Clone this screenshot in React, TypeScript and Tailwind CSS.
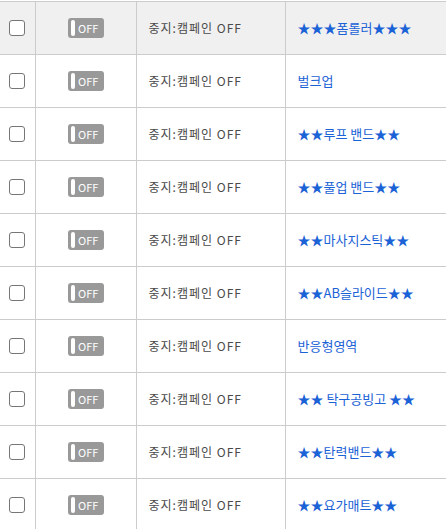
import React from "react";

const names = [
  "★★★폼롤러★★★",
  "벌크업",
  "★★루프 밴드★★",
  "★★풀업 밴드★★",
  "★★마사지스틱★★",
  "★★AB슬라이드★★",
  "반응형영역",
  "★★ 탁구공빙고 ★★",
  "★★탄력밴드★★",
  "★★요가매트★★",
];

function Toggle() {
  return (
    <div className="flex h-[20px] w-[36px] items-center rounded-[3px] bg-[#999999] pl-[3px]">
      <div className="h-[16px] w-[4px] rounded-[2px] bg-white" />
      <span className="ml-[3px] text-[11px] leading-none text-white">OFF</span>
    </div>
  );
}

export default function App() {
  return (
    <div
      className="w-[446px] overflow-hidden bg-white pt-[1px]"
      style={{ fontFamily: '"Noto Sans CJK KR", "Noto Sans", sans-serif' }}
    >
      <table className="w-[460px] table-fixed border-collapse">
        <colgroup>
          <col className="w-[35px]" />
          <col className="w-[101px]" />
          <col className="w-[149px]" />
          <col />
        </colgroup>
        <tbody>
          {names.map((n, i) => (
            <tr
              key={i}
              className={i === 0 ? "h-[53px] bg-[#f0f0f0]" : "h-[53px] bg-white"}
            >
              <td className="border-t border-r border-b border-[#cccccc] p-0 align-middle">
                <div className="flex justify-center">
                  <div className="h-[16px] w-[16px] rounded-[3px] border border-[#767676] bg-white" />
                </div>
              </td>
              <td className="border border-[#cccccc] p-0 align-middle">
                <div className="flex justify-center pl-[1px]">
                  <Toggle />
                </div>
              </td>
              <td className="border border-[#cccccc] p-0 pl-[12px] align-middle text-[12px] tracking-[1px] text-[#4a4a4a]">
                중지:캠페인 OFF
              </td>
              <td className="border border-[#cccccc] p-0 pl-[12px] align-middle text-[13px] text-[#1a62d6]">
                {n}
              </td>
            </tr>
          ))}
        </tbody>
      </table>
    </div>
  );
}
